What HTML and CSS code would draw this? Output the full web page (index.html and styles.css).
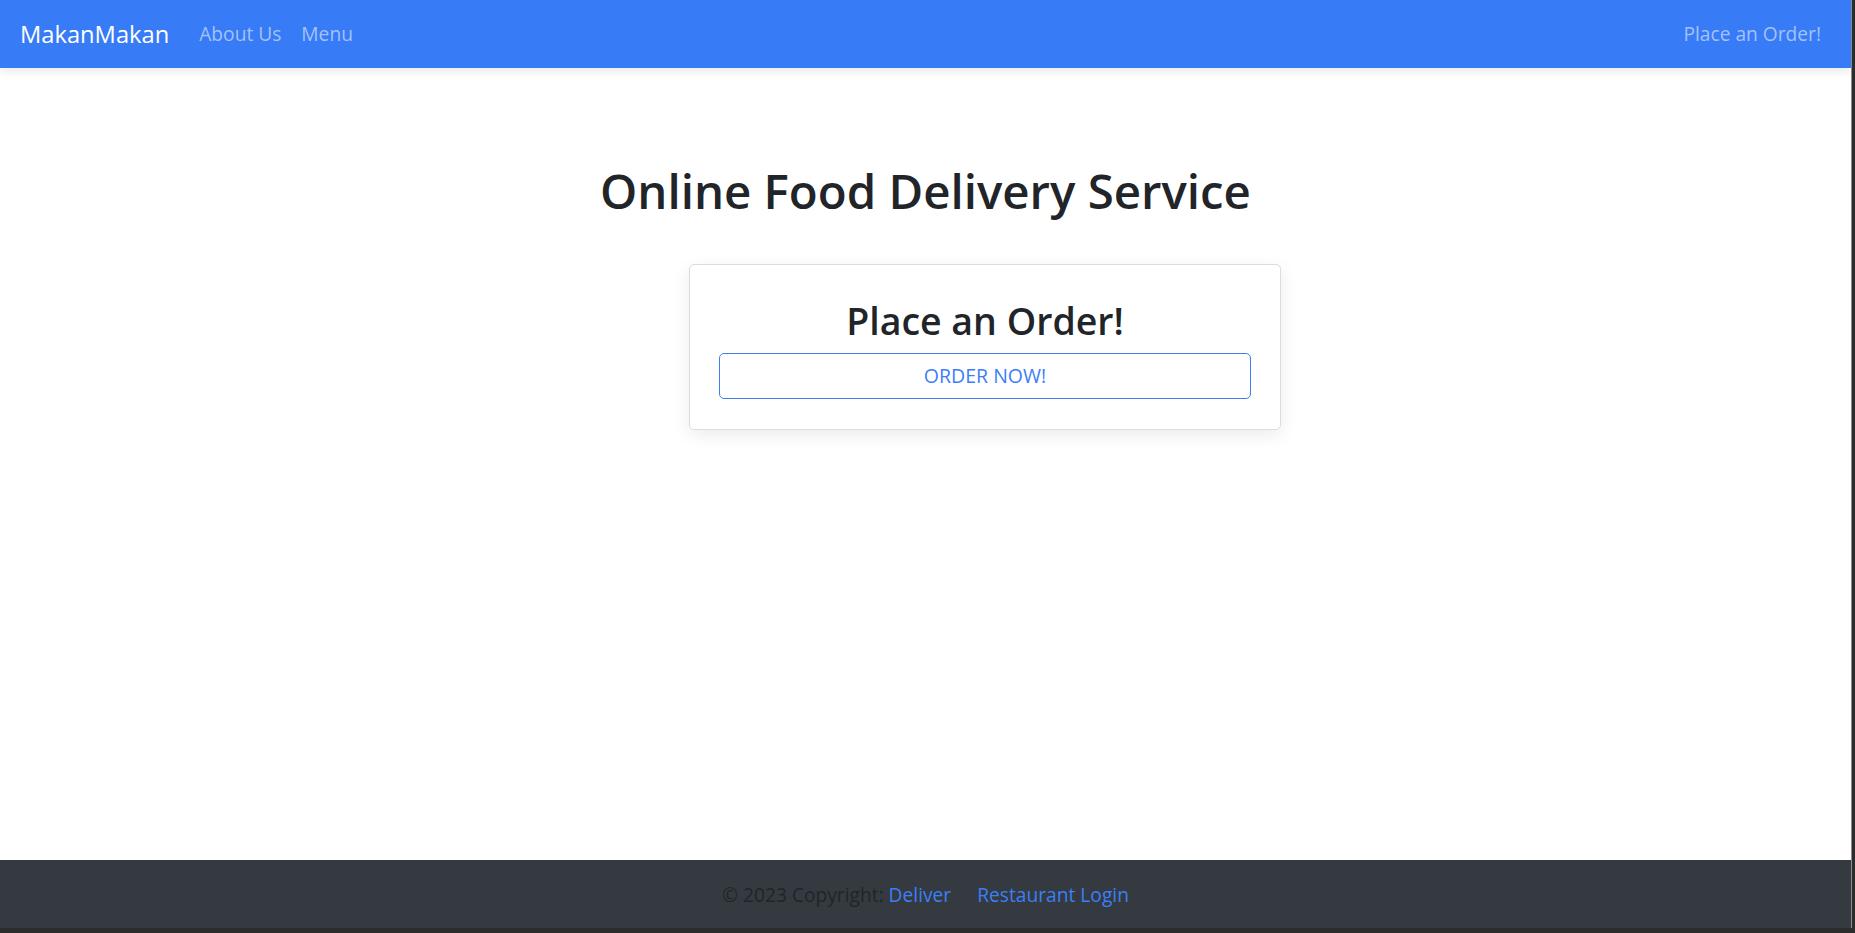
FILE: index.html
```html
<!DOCTYPE html>
<html lang="en">
<head>
<meta charset="utf-8">
<title>MakanMakan</title>
<link rel="stylesheet" href="styles.css">
</head>
<body>
<div class="frame">
  <nav class="navbar">
    <a class="brand" href="#">MakanMakan</a>
    <div class="nav-links">
      <a class="nav-link" href="#">About Us</a>
      <a class="nav-link" href="#">Menu</a>
    </div>
    <div class="nav-right">
      <a class="nav-link" href="#">Place an Order!</a>
    </div>
  </nav>
  <main class="main">
    <h1 class="title">Online Food Delivery Service</h1>
    <div class="card-row">
      <div class="card">
        <h2 class="card-title">Place an Order!</h2>
        <a class="btn-outline" href="#">ORDER NOW!</a>
      </div>
    </div>
  </main>
  <footer class="footer">
    <span class="copy">© 2023 Copyright: </span><a class="foot-link" href="#">Deliver</a><a class="foot-link second" href="#">Restaurant Login</a>
  </footer>
</div>
</body>
</html>
```

FILE: styles.css
```css
html {
  background: #2c2c2c;
  margin: 0;
  padding: 0;
}
body {
  margin: 0;
  padding: 0;
  font-family: "Open Sans", "Noto Sans", sans-serif;
  color: #212529;
}
.frame {
  width: 1851px;
  height: 928px;
  background: #ffffff;
  border-right: 1px solid #8c8c8c;
  display: flex;
  flex-direction: column;
  overflow: hidden;
}
a {
  text-decoration: none;
}
.navbar {
  height: 68px;
  flex: 0 0 68px;
  background: #377bf6;
  display: flex;
  align-items: center;
  padding: 0 30px 0 20px;
  box-shadow: 0 4px 8px rgba(0, 0, 0, 0.08);
  position: relative;
  z-index: 1;
}
.brand {
  color: #ffffff;
  font-size: 23.7px;
  line-height: 34px;
  margin-right: 30px;
}
.nav-links {
  display: flex;
  gap: 20px;
}
.nav-link {
  color: #a3c2fa;
  font-size: 19.2px;
  line-height: 28px;
}
.nav-right {
  margin-left: auto;
}
.main {
  flex: 1;
  display: flex;
  flex-direction: column;
  align-items: center;
  padding-top: 93px;
}
.title {
  margin: 0;
  font-size: 47.4px;
  font-weight: 600;
  line-height: 60px;
}
.card-row {
  margin-top: 43px;
  display: flex;
  justify-content: center;
  width: 100%;
}
.card {
  margin-left: 119px;
  width: 532px;
  padding: 32px 29px 30px;
  border: 1px solid #dcdcdc;
  border-radius: 5px;
  box-shadow: 0 5px 18px rgba(0, 0, 0, 0.08);
  display: flex;
  flex-direction: column;
  align-items: stretch;
}
.card-title {
  margin: 0 0 8px;
  text-align: center;
  font-size: 37.5px;
  font-weight: 600;
  line-height: 48px;
}
.btn-outline {
  display: block;
  height: 44px;
  line-height: 44px;
  border: 1px solid #3b7ff6;
  border-radius: 5px;
  color: #3b7ff6;
  text-align: center;
  font-size: 19.5px;
}
.footer {
  flex: 0 0 68px;
  height: 68px;
  background: #343a40;
  display: flex;
  align-items: center;
  justify-content: center;
  font-size: 19.2px;
}
.copy {
  color: #212529;
  white-space: pre;
}
.foot-link {
  color: #3b7ff6;
}
.foot-link.second {
  margin-left: 26px;
}
```
